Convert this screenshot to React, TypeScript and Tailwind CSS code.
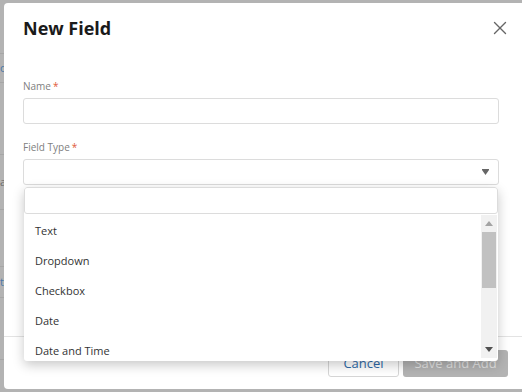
import { X } from "lucide-react";

const fieldTypes = ["Text", "Dropdown", "Checkbox", "Date", "Date and Time"];

// faint rows of the page behind the modal overlay
const backgroundRows = [
  { h: "h-[54px]", text: "" },
  { h: "h-[29px]", text: "d", blue: true },
  { h: "h-[72px]", text: "" },
  { h: "h-[55px]", text: "a" },
  { h: "h-[57px]", text: "" },
  { h: "h-[31px]", text: "t", blue: true },
  { h: "h-[62px]", text: "" },
];

function RequiredLabel({ children }: { children: string }) {
  return (
    <label className="flex h-[14px] items-center gap-[2px] text-[10px] leading-[14px] text-[#808080]">
      {children}
      <span className="text-[#e05a3a]">*</span>
    </label>
  );
}

function FakeScrollbar() {
  return (
    <div className="flex w-[16px] flex-col items-center bg-[#f1f1f1] py-[6px]">
      <svg width="8" height="5" viewBox="0 0 8 5" className="shrink-0">
        <path d="M0 5 L4 0 L8 5 Z" fill="#a3a3a3" />
      </svg>
      <div className="mt-[6px] h-[56px] w-[14px] bg-[#c1c1c1]" />
      <div className="flex-1" />
      <svg width="8" height="5" viewBox="0 0 8 5" className="shrink-0">
        <path d="M0 0 L8 0 L4 5 Z" fill="#505050" />
      </svg>
    </div>
  );
}

function FieldTypeMenu() {
  return (
    <div className="absolute left-[20px] top-[184px] flex h-[174px] w-[474px] flex-col overflow-hidden rounded-[3px] bg-white shadow-[0_4px_12px_rgba(0,0,0,0.22)]">
      <input
        className="h-[27px] w-full shrink-0 rounded-[3px] border border-[#dcdcdc] px-2 text-[11px] outline-none"
        type="text"
      />
      <div className="flex min-h-0 flex-1">
        <ul className="min-h-0 flex-1 overflow-hidden pt-[2px]">
          {fieldTypes.map((type) => (
            <li key={type} className="flex h-[30px] items-center px-[11px] text-[11px] text-[#333333]">
              {type}
            </li>
          ))}
        </ul>
        <div className="flex pb-[3px] pr-[1px] pt-[1px]">
          <FakeScrollbar />
        </div>
      </div>
    </div>
  );
}

export default function App() {
  return (
    <div
      className="relative h-[392px] w-[522px] overflow-hidden bg-[#b3b3b3]"
      style={{ fontFamily: '"Open Sans", "Noto Sans", sans-serif' }}
    >
      <div className="flex flex-col">
        {backgroundRows.map((row, i) => (
          <div key={i} className={`${row.h} flex items-center border-b border-[#a6a6a6]`}>
            {row.text && (
              <span className={`text-[11px] ${row.blue ? "text-[#4a78a8]" : "text-[#6b6b6b]"}`}>
                {row.text}
              </span>
            )}
          </div>
        ))}
      </div>

      <div className="absolute left-[4px] top-[3px] flex h-[386px] w-[522px] flex-col rounded-[4px] bg-white">
        <div className="mt-[13px] flex h-[24px] items-center justify-between pl-[19px] pr-[15px]">
          <h2 className="text-[18px] font-bold leading-[24px] text-[#1a1a1a]">New Field</h2>
          <X className="h-[22px] w-[22px] text-[#666666]" strokeWidth={1.5} />
        </div>

        <div className="flex flex-col pl-[19px] pr-[27px] pt-[39px]">
          <RequiredLabel>Name</RequiredLabel>
          <input
            type="text"
            className="mt-[5px] h-[26px] w-full rounded-[3px] border border-[#dcdcdc] px-2 text-[11px] outline-none"
          />

          <div className="mt-[16px]">
            <RequiredLabel>Field Type</RequiredLabel>
          </div>
          <div className="mt-[5px] flex h-[26px] w-full items-center justify-end rounded-[3px] border border-[#dcdcdc] pr-[9px]">
            <svg width="7" height="6" viewBox="0 0 7 6">
              <path d="M0 0 H7 V1 L3.5 6 L0 1 Z" fill="#666666" />
            </svg>
          </div>
        </div>

        <div className="flex-1" />

        <div className="flex justify-end gap-[4px] border-t border-[#e3e3e3] pb-[12px] pr-[18px] pt-[13px]">
          <button className="h-[27px] w-[71px] rounded-[3px] border border-[#d6d6d6] bg-white text-[13px] text-[#2f6aa8]">
            Cancel
          </button>
          <button className="h-[27px] w-[105px] rounded-[3px] bg-[#b3b3b3] text-[13px] text-[#e2e2e2]">
            Save and Add
          </button>
        </div>

        <FieldTypeMenu />
      </div>
    </div>
  );
}
